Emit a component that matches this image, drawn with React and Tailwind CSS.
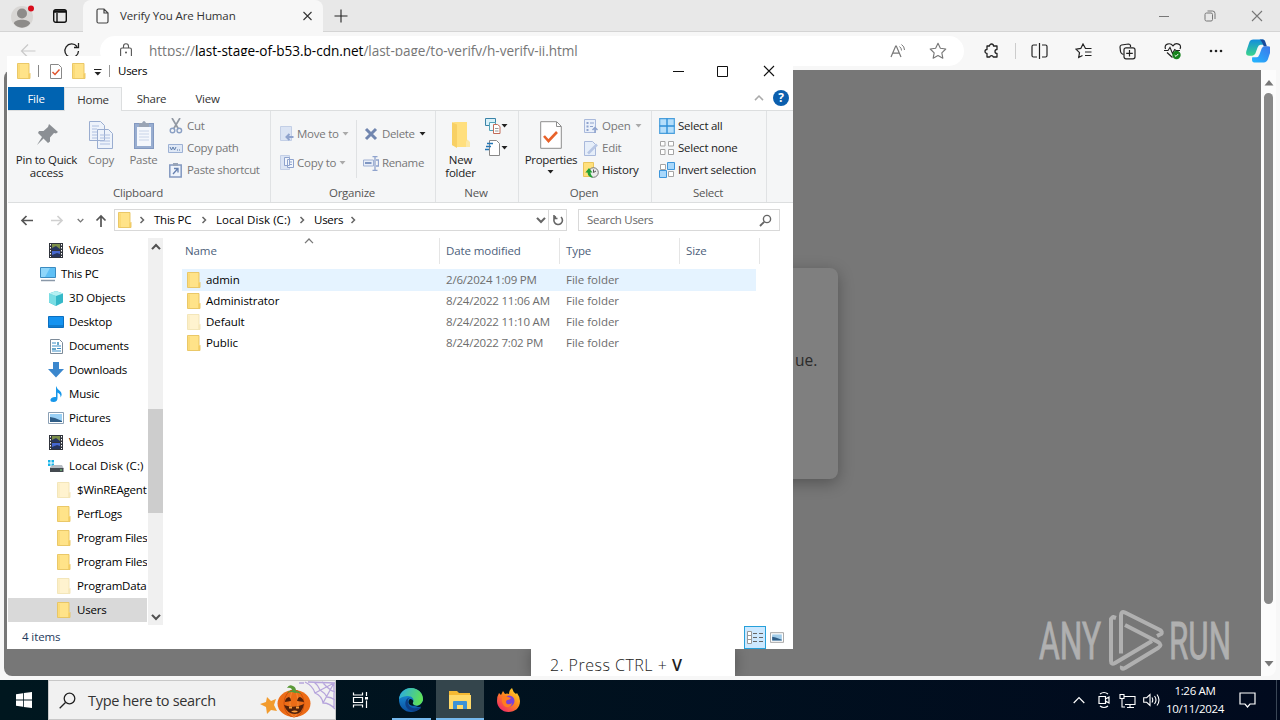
import React from "react";

const Svg = ({ w = 16, h = w, vb, className = "", children }) => (
  <svg width={w} height={h} viewBox={vb || `0 0 ${w} ${h}`} fill="none" className={`shrink-0 ${className}`}>
    {children}
  </svg>
);

/* ---------- shared glyphs ---------- */
const Folder = ({ pale = false }) => (
  <Svg w={14} h={16}>
    <path d="M.5.500h11.500v9l1 1v5H.5z" fill={pale ? "#fff3cf" : "#ffe389"} stroke={pale ? "#f2e3b4" : "#e8c35e"} strokeWidth=".9" />
    <path d="M1.300 15V1.500h1.500V15z" fill={pale ? "#fbecc0" : "#fad872"} />
    <path d="M11.300 15V10l1.500 1v4z" fill={pale ? "#f5e6b8" : "#f2cb60"} />
  </Svg>
);
const Caret = ({ c = "#222" }) => (
  <Svg w={7} h={4}><path d="M.5 0h6l-3 3.400z" fill={c} /></Svg>
);
const Chevron = ({ d = "r", c = "#666", s = 8, sw = 1.5 }) => (
  <Svg w={s} vb="0 0 8 8">
    <path d={{ r: "M2.500 1l3 3-3 3", d: "M.8 2.300L4 5.600l3.200-3.300", u: "M.8 5.700L4 2.400l3.200 3.300" }[d]} stroke={c} strokeWidth={sw} />
  </Svg>
);
const Arrow = ({ d = "M13 6.500H2M6.500 2L2 6.500 6.500 11", c = "#555" }) => (
  <Svg w={14} h={13}><path d={d} stroke={c} strokeWidth="1.700" /></Svg>
);

/* ---------- browser ---------- */
function TabStrip() {
  return (
    <div className="flex h-8 shrink-0 border-b border-[#d4d4d4] bg-[#e8e8e8]">
      <div className="flex w-[83px] items-center pl-[10px]">
        <Svg w={26} h={26}>
          <circle cx="12" cy="14" r="11" fill="#d8d6d4" />
          <circle cx="12" cy="10.500" r="5" fill="#8d8b89" />
          <path d="M4 20.500c0-5 16-5 16 0-3 5.500-13 5.500-16 0z" fill="#8d8b89" />
          <circle cx="21" cy="5.500" r="3" fill="#d80d1c" />
        </Svg>
        <Svg w={16} className="ml-4">
          <rect x="1.700" y="1.700" width="12.600" height="12.600" rx="2" stroke="#111" strokeWidth="1.400" />
          <path d="M2 3.500h12" stroke="#111" strokeWidth="2.500" /><path d="M5 5v9" stroke="#111" strokeWidth="1.400" />
        </Svg>
      </div>
      <div className="-mb-px flex w-[240px] items-center rounded-t-lg bg-[#f7f7f7] pl-[13px]">
        <Svg w={13} h={16}>
          <path d="M1 2.500Q1 1 2.500 1H8l4 4v8.500Q12 15 10.500 15h-8Q1 15 1 13.500zM8 1v4h4" stroke="#444" strokeWidth="1.200" />
        </Svg>
        <span className="ml-[11px] w-[176px] text-[11.5px] tracking-[-0.12px] text-[#333]">Verify You Are Human</span>
        <Svg w={20} h={10} className="ml-[2px]"><path d="M5.500 1l8 8M13.500 1l-8 8" stroke="#333" strokeWidth="1.100" /></Svg>
      </div>
      <Svg w={14} className="ml-[11px] mt-[9px]"><path d="M7 .5v13M.5 7h13" stroke="#222" strokeWidth="1.100" /></Svg>
      <div className="ml-auto flex items-center pr-[17px]">
        <Svg w={10}><path d="M0 5.500h10" stroke="#777" /></Svg>
        <Svg w={12} className="mx-[35px]">
          <rect x="1" y="3" width="7.500" height="8" rx="1.500" stroke="#777" />
          <path d="M3.500 1h5Q11 1 11 3.500V9" stroke="#777" />
        </Svg>
        <Svg w={12}><path d="M1 1l10 10M11 1L1 11" stroke="#777" strokeWidth="1.100" /></Svg>
      </div>
    </div>
  );
}

const STAR = "M8 1.200l2.100 4.400 4.800.6-3.500 3.400.9 4.800L8 12.100l-4.300 2.300.9-4.800L1.100 6.200l4.800-.6z";

function Toolbar() {
  return (
    <div className="flex h-[38px] shrink-0 items-center bg-[#f7f7f7]">
      <div className="flex w-[100px] items-center pl-5">
        <Svg w={16}><path d="M15.500 8H1.500M8 1.500L1.500 8 8 14.500" stroke="#c9c9c9" strokeWidth="1.200" /></Svg>
        <Svg w={18} className="ml-[27px]"><path d="M15.500 9A6.800 6.800 0 1 1 14 4.500M15.500 1v4.500H11" stroke="#222" strokeWidth="1.300" /></Svg>
      </div>
      <div className="flex h-[30px] w-[864px] items-center rounded-full bg-white pl-[19px] pr-[17px]">
        <Svg w={14} h={16}>
          <rect x="1.600" y="5" width="10.800" height="10" rx="1.500" stroke="#555" strokeWidth="1.100" />
          <path d="M4.500 5V3.200a2.500 2.500 0 0 1 5 0V5" stroke="#555" strokeWidth="1.100" /><circle cx="7" cy="9.500" r="1" fill="#555" />
        </Svg>
        <span className="ml-[16px] whitespace-nowrap text-[13.6px] tracking-[-0.05px] text-[#777]">
          https://<span className="text-black">last-stage-of-b53.b-cdn.net</span>/last-page/to-verify/h-verify-ii.html
        </span>
        <span className="ml-auto flex items-center gap-[22px]">
          <Svg w={17} h={16}>
            <path d="M1 14L5.700 3h.6L11 14M2.700 10.200h6.600" stroke="#777" strokeWidth="1.200" />
            <path d="M9.500 3.500q2 1.500 2 4M11.500 1.500q3 2 3 5.500" stroke="#777" />
          </Svg>
          <Svg w={18} vb="0 0 16 16"><path d={STAR} stroke="#777" strokeLinejoin="round" /></Svg>
        </span>
      </div>
      <div className="flex grow items-center pl-[19px]">
        <Svg w={17}>
          <path d="M4 3h2.500a2 2 0 0 1 4 0H14v3.500a1.900 1.900 0 1 0 0 4V14h-3.700a1.900 1.900 0 0 0-3.600 0H4v-3.500a2 2 0 1 1 0-4z" stroke="#222" strokeWidth="1.300" strokeLinejoin="round" />
        </Svg>
        <span className="ml-[15px] h-4 w-px bg-[#ccc]" />
        <Svg w={17} h={16} className="ml-[15px]">
          <path d="M6 2H2.500Q1 2 1 3.500v9Q1 14 2.500 14H6M11 2h3.500Q16 2 16 3.500v9q0 1.500-1.500 1.500H11M8.500 0v16" stroke="#222" strokeWidth="1.200" />
        </Svg>
        <Svg w={17} h={16} className="ml-[27px]">
          <path d="M10.500 5.500L8 1 5.800 5.400 1 6.100l3.500 3.500-.8 4.900 3.800-2M10 5.500h6.500M10 9h6.500M10 12.500h6.500" stroke="#222" strokeWidth="1.200" />
        </Svg>
        <Svg w={17} className="ml-[27px]">
          <path d="M4.500 11.500L3 10.800Q1.700 10 1.500 8.500L1 4Q1 2.500 2.500 2l7-1Q11 1 11.500 2.500V4" stroke="#222" strokeWidth="1.200" />
          <rect x="5" y="4.800" width="11" height="11" rx="2" stroke="#222" strokeWidth="1.200" /><path d="M10.500 7v6.500M7.200 10.300h6.600" stroke="#222" strokeWidth="1.200" />
        </Svg>
        <Svg w={18} className="ml-[28px]">
          <path d="M1.500 7C-.5 2 6 0 9 3.800 12 0 18.500 2 16 7M3 10.500l5.500 5" stroke="#222" strokeWidth="1.200" />
          <path d="M0 8.500h4l2-3 2.500 6 2.200-4 1.300 1h4" stroke="#222" strokeWidth="1.100" />
          <circle cx="12.500" cy="13" r="4.200" fill="#16821c" /><path d="M10.700 13.200l1.300 1.200 2.300-2.500" stroke="#fff" />
        </Svg>
        <Svg w={16} h={4} className="ml-[26px]"><circle cx="3" cy="2" r="1.300" fill="#222" /><circle cx="8" cy="2" r="1.300" fill="#222" /><circle cx="13" cy="2" r="1.300" fill="#222" /></Svg>
        <Svg w={24} h={24} vb="0 0 23 22" className="ml-[22px]">
          <defs>
            <linearGradient id="cpa" x1="0" y1="0" x2="0" y2="1"><stop stopColor="#128ddd" /><stop offset="1" stopColor="#3bd58c" /></linearGradient>
            <linearGradient id="cpb" x1="1" y1="0" x2="0" y2="1"><stop stopColor="#3f75e9" /><stop offset="1" stopColor="#22b8ff" /></linearGradient>
          </defs>
          <path d="M7 0h9q3 0 2 5h-4q-2 0-3 3l-2 5.500q-1 2-3 2H3q-4 0-2.500-5L3 3q1-3 4-3z" fill="url(#cpa)" />
          <path d="M17 22H8q-3 0-2-5h4q2 0 3-3l2-5.500q1-2 3-2h3q4 0 2.500 5L21 19q-1 3-4 3z" fill="url(#cpb)" />
          <path d="M13 0h3q2 0 3 3.500l1 3h-3Q15 1 13 0z" fill="#194a9c" />
        </Svg>
      </div>
    </div>
  );
}

function AnyRun() {
  return (
    <svg width="196" height="66" viewBox="0 0 196 66" className="absolute bottom-px right-[27px]" fill="none">
      <g fontFamily="Roboto, 'Liberation Sans', sans-serif" fontSize="52" fontWeight="400" fill="#b0b0b0" stroke="#b0b0b0" strokeWidth=".9">
        <text x="1" y="50" textLength="62" lengthAdjust="spacingAndGlyphs">ANY</text>
        <text x="131" y="50" textLength="62" lengthAdjust="spacingAndGlyphs">RUN</text>
      </g>
      <g stroke="#b0b0b0" strokeWidth="4" strokeLinejoin="round">
        <path d="M78 9l-3-1-2 2v42q0 4 4 2l37-22" />
        <path d="M119 27l4-2q2-2-1-4L87 3.500q-4-2-4 3v38" />
        <path d="M87 16l33 17q5 3 0 6L87 59q-4 2-3-2" />
      </g>
    </svg>
  );
}

function Browser() {
  return (
    <div className="flex h-[680px] flex-col bg-[#f7f7f7]">
      <TabStrip />
      <Toolbar />
      <div className="flex h-[606px] pl-1">
        <div className="relative w-[1257px] overflow-hidden rounded-bl-lg rounded-tl-lg bg-[#777]">
          <div className="absolute left-[420px] top-[198px] h-[211px] w-[414px] rounded-lg bg-[#7f7f7f] pl-[371px] pt-[80px] text-[15.5px] leading-6 text-[#2b2b2b] shadow-[0_4px_16px_rgba(0,0,0,0.3)]">ue.</div>
          <div className="absolute bottom-0 left-[527px] flex h-[27px] w-[204px] items-start bg-white pl-[19px] text-[16px] tracking-[0.5px] text-[#222] shadow-[0_0_14px_rgba(0,0,0,0.3)]">
            <span className="mt-[6px] whitespace-nowrap font-light leading-[21px]">2. Press CTRL + <b className="font-semibold">V</b></span>
          </div>
          <AnyRun />
        </div>
        <div className="flex w-[15px] flex-col items-center rounded-br-lg bg-[#fcfcfc] pt-[10px]">
          <Svg w={10} h={6}><path d="M5 0l4.500 5.500h-9z" fill="#777" /></Svg>
          <div className="mt-[7px] h-[511px] w-[9px] rounded-full bg-[#888]" />
          <Svg w={10} h={6} className="mt-[57px]"><path d="M5 5.500L.5 0h9z" fill="#777" /></Svg>
        </div>
      </div>
    </div>
  );
}

/* ---------- explorer ribbon ---------- */
const Group = ({ label, w, children }) => (
  <div className={`flex flex-col border-r border-[#e0e2e4] ${w}`}>
    <div className="flex h-[73px]">{children}</div>
    <div className="h-[18px] pr-[2px] text-center leading-[18px] text-[#555]">{label}</div>
  </div>
);
const Big = ({ w, icon, label, dim }) => (
  <div className={`flex shrink-0 flex-col items-center pt-[5px] ${w}`}>
    <div className="flex h-[37px] items-center">{icon}</div>
    <div className={`whitespace-pre text-center leading-[13px] ${dim ? "text-[#777]" : "text-[#222]"}`}>{label}</div>
  </div>
);
const Small = ({ icon, label, dim, caret, h = "h-[22px]", gap = "gap-[4px]" }) => (
  <div className={`flex items-center whitespace-nowrap ${h} ${gap} ${dim ? "text-[#777]" : "text-[#222]"}`}>
    <span className="flex w-[15px] justify-center">{icon}</span>
    {label && <span>{label}</span>}
    {caret && <Caret c={caret} />}
  </div>
);

const I = {
  pin: <Svg w={24} h={24}><path d="M14 1l9 8-2 1.500-2-.5-4 4.500v4l-2 1.500-4.500-4.500L2 22l5-8-4-4 1-2h4.500L13 4z" fill="#8b8f94" /></Svg>,
  copy: <Svg w={26} h={30}><path d="M1.500 1.500h11l4 4v15h-15zM9.500 9.500h11l4 4v15h-15z" fill="#eef3fb" stroke="#9aadd0" /><path d="M4 6h7M4 9h5M4 12h5M4 15h5M4 18h5M12 15h10M12 18h10M12 21h10M12 24h10" stroke="#aebfe0" /></Svg>,
  paste: <Svg w={22} h={30}><rect x="1.500" y="3.500" width="19" height="25" fill="#98add0" stroke="#8298c0" /><path d="M4 7h14v19H4z" fill="#f4f7fc" /><path d="M6 7V3h3q2-4 4 0h3v4z" fill="#9aa4b4" /><path d="M6 11h10M6 14h10M6 17h10M6 20h10" stroke="#c8d4e8" /></Svg>,
  cut: <Svg w={14} h={16}><path d="M3 0l6.500 11M11 0L4.500 11" stroke="#9299a3" strokeWidth="1.700" /><circle cx="3.500" cy="12.500" r="2.300" stroke="#8ba0c4" strokeWidth="1.400" /><circle cx="10.300" cy="12.500" r="2.300" stroke="#8ba0c4" strokeWidth="1.400" /></Svg>,
  path: <Svg w={15} h={9}><path d="M.5.500h14v8H.5z" fill="#dfe8f6" stroke="#9db1d4" /><path d="M2 3l1.500 3L5 3l1.500 3L8 3M9 6h1M11 6h1" stroke="#5d7cab" /></Svg>,
  shortcut: <Svg w={13} h={15}><path d="M.8 2h11.400v12H.8z" fill="#eef3fb" stroke="#8298c0" strokeWidth="1.500" /><path d="M4 0h5v3H4z" fill="#98a4b8" /><path d="M4 11l4.500-5M5 5.500h4v4" stroke="#6681b0" strokeWidth="1.300" /></Svg>,
  move: <Svg w={14} h={16}><path d="M.5.500h11v14H.5z" fill="#dbe4f4" stroke="#c3cfe6" /><path d="M13.500 11H7M9.500 8L6.500 11l3 3" stroke="#8fa3cd" strokeWidth="2" /></Svg>,
  copyto: <Svg w={14} h={16}><path d="M.5.500h9v14h-9z" fill="#dbe4f4" stroke="#c3cfe6" /><path d="M4.500 2.500h5v8h-5zM7.500 4.500h6v8h-6z" fill="#f2f6fc" stroke="#8fa3cd" /><path d="M9 7h3M9 9.500h3" stroke="#8fa3cd" /></Svg>,
  del: <Svg w={14} h={14}><path d="M2 2l10 10M12 2L2 12" stroke="#7186af" strokeWidth="3" /></Svg>,
  rename: <Svg w={16} h={15}><path d="M.5 4h10v6H.5z" fill="#e8eef9" stroke="#a0b1d3" /><path d="M2 7h6.500" stroke="#7f96c2" strokeWidth="2" /><path d="M9.500.700h5M12 .7v13.600M9.500 14.300h5M13 4h2.500v6H13" stroke="#8fa3cd" strokeWidth="1.300" /></Svg>,
  newFolder: <Svg w={20} h={28}><path d="M1 1.500L4 1h12v19l1.500 1v5H6L1 24z" fill="#ffdf7e" /><path d="M1 1.500l5 2V27l-5-3z" fill="#f8d064" /><path d="M15 26v-5.500l1.500-2 2.500 2.500v5z" fill="#fbe8a8" /></Svg>,
  newItem: <Svg w={16} h={16}><path d="M.5.500h10v7H.5z" fill="#d8f0f8" stroke="#3a83a8" /><path d="M4.500 4.500h6v8h-6z" fill="#eefaff" stroke="#54a3b9" /><path d="M8.500 6.500h4l2.500 2v7H8.500z" fill="#fff" stroke="#c26b58" /><path d="M10 10.500h3.500M10 13h3.500" stroke="#999" /></Svg>,
  easy: <Svg w={16} h={16}><path d="M4.500.500h7l3 3v12h-10z" fill="#fff" stroke="#888" /><path d="M2 3.500h6M1 6.500h5M0 9.500h4" stroke="#2376b5" strokeWidth="1.400" /></Svg>,
  props: <Svg w={22} h={28}><path d="M.7.700h16l4.600 4.600v22H.7z" fill="#fff" stroke="#8e8e8e" /><path d="M16.500 1v4.500H21" stroke="#8e8e8e" /><path d="M4 15l4.500 5L17 11" stroke="#e8622a" strokeWidth="2.600" /></Svg>,
  open: <Svg w={14} h={15}><path d="M.5.500h11v13H.5z" fill="#eaf0fa" stroke="#a9b9db" /><path d="M2.500 3h2v2h-2zM2.500 6.500h2v2h-2zM2.500 10h2v2h-2z" fill="#8fa3cd" /><path d="M6 4h4M6 7.500h3" stroke="#8fa3cd" /><path d="M11 14V9M8.500 11L11 8.500l2.500 2.500" stroke="#8fa3cd" strokeWidth="1.500" /></Svg>,
  edit: <Svg w={14} h={15}><path d="M.5.500h8l3 3v11H.5z" fill="#e6eef9" stroke="#a9b9db" /><path d="M4 12.500L13 3.500" stroke="#b7c6e4" strokeWidth="2.500" /></Svg>,
  history: <Svg w={16} h={16}><path d="M.5.500h10v14h-10z" fill="#ffe07c" stroke="#eac55c" /><circle cx="10.500" cy="10.500" r="4.800" fill="#eaeaea" stroke="#777" /><path d="M10.500 7.500v3l2.500-1.500" stroke="#555" /><path d="M10 15.500q-5 0-5.500-5H2.300L6 6l3.500 4.500H7.300Q8 13.500 10 15.500z" fill="#25a035" /></Svg>,
  all: <Svg w={16} h={16}><path d="M.7.700h14.600v14.600H.7z" fill="#b5defb" stroke="#4a9fdc" strokeWidth="1.200" /><path d="M8 .5v15M.5 8h15" stroke="#2f8fd8" strokeWidth="1.400" /></Svg>,
  none: <Svg w={14} h={14}><path d="M.5.500h4.500v4.500H.5zM8.500.500h5v4.500h-5zM.5 8.500h4.500v5H.5zM8.500 8.500h5v5h-5z" fill="#fff" stroke="#a5a5a5" /></Svg>,
  invert: <Svg w={16} h={16}><path d="M1.500 2.500h5v5h-5zM9.500 9.500h5v5h-5z" fill="#fff" stroke="#a5a5a5" /><path d="M8.500.500h7v7h-7zM.5 8.500h7v7h-7z" fill="#a9d8fb" stroke="#3d96db" /></Svg>,
};

function Ribbon() {
  return (
    <div className="flex h-[92px] border-b border-[#dcdedf] bg-[#f5f6f7]">
      <Group label="Clipboard" w="w-[263px]">
        <Big w="w-[77px]" icon={I.pin} label={"Pin to Quick\naccess"} />
        <Big w="w-[32px]" icon={I.copy} label="Copy" dim />
        <Big w="w-[53px]" icon={I.paste} label="Paste" dim />
        <div className="-ml-[2px] pt-[4px] tracking-[-0.33px]">
          <Small icon={I.cut} label="Cut" dim />
          <Small icon={I.path} label="Copy path" dim />
          <Small icon={I.shortcut} label="Paste shortcut" dim />
        </div>
      </Group>
      <Group label="Organize" w="w-[165px]">
        <div className="w-[85px] pl-[8px] pt-[8px]">
          <Small h="h-[29px]" gap="gap-[3px]" icon={I.move} label="Move to" dim caret="#aaa" />
          <Small h="h-[29px]" gap="gap-[3px]" icon={I.copyto} label="Copy to" dim caret="#aaa" />
        </div>
        <div className="mt-[9px] h-[58px] border-l border-[#dfe1e3] pl-[6px] tracking-[-0.35px]">
          <Small h="h-[28px]" icon={I.del} label="Delete" dim caret="#222" />
          <Small h="h-[30px]" icon={I.rename} label="Rename" dim />
        </div>
      </Group>
      <Group label="New" w="w-[83px]">
        <Big w="w-[49px]" icon={I.newFolder} label={"New\nfolder"} />
        <div className="pt-[4px]">
          <Small gap="gap-[1px]" icon={I.newItem} caret="#222" />
          <Small gap="gap-[1px]" icon={I.easy} caret="#222" />
        </div>
      </Group>
      <Group label="Open" w="w-[133px]">
        <Big w="w-[64px]" icon={I.props} label={<span className="tracking-[-0.32px]">Properties<span className="flex h-[12px] items-center justify-center"><Caret /></span></span>} />
        <div className="pt-[4px]">
          <Small icon={I.open} label="Open" dim caret="#aaa" />
          <Small icon={I.edit} label="Edit" dim />
          <Small icon={I.history} label="History" />
        </div>
      </Group>
      <Group label="Select" w="w-[115px]">
        <div className="pl-[7px] pt-[4px]">
          <Small icon={I.all} label="Select all" />
          <Small icon={I.none} label="Select none" />
          <Small icon={I.invert} label="Invert selection" />
        </div>
      </Group>
    </div>
  );
}

/* ---------- explorer body ---------- */
const Film = (
  <Svg w={14} h={15}><path d="M0 0h14v15H0z" fill="#30343c" /><path d="M3 1h8v6H3z" fill="#7c8f4a" /><path d="M3 8h8v6H3z" fill="#4668d0" /><path d="M3 5l4-2 4 3v1H3zM3 12l5-2 3 1v3H3z" fill="#26355e" /><path d="M1.500 1v13M12.500 1v13" stroke="#fff" strokeDasharray="1.500 1.500" /></Svg>
);
const Picture = (
  <Svg w={16} h={12}><path d="M.5.500h15v11H.5z" fill="#fff" stroke="#8ba0b5" /><path d="M2 2h12v8H2z" fill="#9ad0f5" /><path d="M2 5l5 1 7 3v1H2z" fill="#2f5d86" /></Svg>
);
const NAV = [
  ["Videos", 2, Film],
  ["This PC", 1, <Svg w={16} h={15}><path d="M.5.500h15v10H.5z" fill="#5fc0f5" stroke="#3b8bc0" /><path d="M1 1h9L5 10H1z" fill="#8fd6fa" /><path d="M1 13.500h14" stroke="#8a98a8" strokeWidth="1.500" /></Svg>],
  ["3D Objects", 2, <Svg w={16} h={15}><path d="M8 0l7 2.500v9L8 15l-7-3.500v-9z" fill="#35b8c8" /><path d="M1 2.500L8 5v10l-7-3.500z" fill="#79dde4" /><path d="M1 2.500L8 0l7 2.500L8 5z" fill="#b5f0f2" /></Svg>],
  ["Desktop", 2, <Svg w={16} h={12}><path d="M.5.500h15v11H.5z" fill="#1593f0" stroke="#0b6fc0" /><path d="M1 10h14" stroke="#0c64ad" /></Svg>],
  ["Documents", 2, <Svg w={13} h={15}><path d="M.5.500h9l3 3v11H.5z" fill="#fff" stroke="#7d8b99" /><path d="M2 4h4M2 7h9M7 9.500h4M2 12h9" stroke="#3b8fc8" /><path d="M2 9h4v2H2zM7 3h2v3H7z" fill="#6ba8c8" /></Svg>],
  ["Downloads", 2, <Svg w={16} h={16}><path d="M5 0h6v7h5l-8 8.500L0 7h5z" fill="#3b87cd" /></Svg>],
  ["Music", 2, <Svg w={13} h={16}><path d="M6 0q1 3 4 5 3 3 .5 6.500Q11 8 7.500 6.500V12q0 4-4 4-3.500 0-3-2.500Q1.500 10.500 6 11z" fill="#1797ea" /></Svg>],
  ["Pictures", 2, Picture],
  ["Videos", 2, Film],
  ["Local Disk (C:)", 2, <Svg w={16} h={14}><path d="M0 1h2.500v2.500H0zM3.500 1H6v2.500H3.500zM0 4.500h2.500V7H0zM3.500 4.500H6V7H3.500z" fill="#19b4e8" /><path d="M2 8l3-2h9l1.500 3v1H2z" fill="#b7bcc2" /><path d="M2 9h13.500v4H2z" fill="#444a50" /><path d="M12 11h2" stroke="#7de080" /></Svg>],
  ["$WinREAgent", 3, <Folder pale />],
  ["PerfLogs", 3, <Folder />],
  ["Program Files", 3, <Folder />],
  ["Program Files", 3, <Folder />],
  ["ProgramData", 3, <Folder pale />],
  ["Users", 3, <Folder />],
];
const INDENT = { 1: "pl-[32px]", 2: "pl-[40px]", 3: "pl-[48px]" };
const FILES = [
  ["admin", "2/6/2024 1:09 PM"],
  ["Administrator", "8/24/2022 11:06 AM"],
  ["Default", "8/24/2022 11:10 AM"],
  ["Public", "8/24/2022 7:02 PM"],
];

function Explorer() {
  return (
    <div className="absolute left-[7px] top-[56px] flex h-[593px] w-[786px] flex-col bg-white pl-px text-[11.5px] tracking-[-0.25px]">
      <div className="flex h-[31px] shrink-0 items-center pb-px pl-[9px]">
        <Folder />
        <span className="ml-[7px] h-3 w-px bg-[#888]" />
        <Svg w={12} h={15} className="ml-[11px]"><path d="M.5.500h8l3 3v11H.5z" fill="#fff" stroke="#888" /><path d="M2.500 8l2.500 2.500 4.500-5" stroke="#e0552e" strokeWidth="1.500" /></Svg>
        <span className="ml-[10px]"><Folder /></span>
        <Svg w={8} h={7} className="ml-[8px] mt-[3px]"><path d="M0 .5h7.500" stroke="#222" /><path d="M.5 3h6.500L3.800 6.500z" fill="#222" /></Svg>
        <span className="ml-[7px] h-3 w-px bg-[#999]" />
        <span className="ml-[8px] text-black">Users</span>
        <span className="ml-auto flex items-center pr-[18px]">
          <Svg w={11}><path d="M0 5.500h11" stroke="#111" /></Svg>
          <Svg w={11} className="ml-[33px]"><path d="M.5.500h10v10H.5z" stroke="#111" /></Svg>
          <Svg w={12} className="ml-[35px]"><path d="M1 1l10 10M11 1L1 11" stroke="#111" strokeWidth="1.100" /></Svg>
        </span>
      </div>
      <div className="flex h-6 shrink-0 border-b border-[#dcdedf] text-center leading-[24px] text-[#333]">
        <div className="h-[23px] w-14 bg-[#0063b1] text-white">File</div>
        <div className="h-6 w-[58px] border-x border-t border-[#dcdedf] bg-[#f5f6f7] leading-[23px]">Home</div>
        <div className="w-[58px] pl-px">Share</div>
        <div className="w-[54px] pl-px">View</div>
        <div className="ml-auto flex items-center gap-[9px] pb-[2px] pr-[4px]">
          <Chevron d="u" c="#aaa" s={10} sw={1.200} />
          <span className="flex size-4 items-center justify-center rounded-full bg-[#0b5fae] text-[12px] font-bold leading-none text-white">?</span>
        </div>
      </div>
      <Ribbon />
      <div className="flex h-[35px] shrink-0 items-center pb-px pl-[12px]">
        <Arrow />
        <span className="ml-[16px]"><Arrow d="M1 6.500h11M7.500 2L12 6.500 7.500 11" c="#d0d0d0" /></span>
        <span className="ml-[13px]"><Chevron d="d" c="#777" s={7} /></span>
        <span className="ml-[10px]"><Arrow d="M7 13V2M2.500 6.500L7 2l4.500 4.500" /></span>
        <div className="ml-[6px] flex h-[22px] w-[453px] items-center border border-[#d9d9d9] pl-[3px] text-black">
          <Folder />
          <span className="ml-[6px]"><Chevron /></span>
          <span className="ml-[8px] w-[39px] whitespace-nowrap">This PC</span>
          <span className="ml-[7px]"><Chevron /></span>
          <span className="ml-[8px] w-[75px] whitespace-nowrap tracking-[0.06px]">Local Disk (C:)</span>
          <span className="ml-[7px]"><Chevron /></span>
          <span className="ml-[8px] w-[28px]">Users</span>
          <span className="ml-[7px]"><Chevron /></span>
          <span className="ml-auto"><Chevron d="d" c="#666" s={10} sw={1.700} /></span>
          <span className="ml-[2px] flex h-full w-[18px] items-center justify-center border-l border-[#d9d9d9]">
            <Svg w={12} h={12}><path d="M9 3a4.300 4.300 0 1 1-5-.5M2 1v3.500h3.500" stroke="#666" strokeWidth="1.600" /></Svg>
          </span>
        </div>
        <div className="ml-[11px] flex h-[22px] w-[202px] items-center justify-between border border-[#d9d9d9] pl-[8px] pr-[7px] tracking-[-0.3px] text-[#666]">
          Search Users
          <Svg w={13} h={13}><circle cx="8" cy="5" r="3.600" stroke="#666" strokeWidth="1.400" /><path d="M5.200 7.800L1 12" stroke="#666" strokeWidth="1.900" /></Svg>
        </div>
      </div>
      <div className="flex h-[387px] shrink-0">
        <div className="w-[139px] overflow-hidden">
          {NAV.map(([name, level, icon], i) => (
            <div key={i} className={`flex h-6 items-center whitespace-nowrap text-black ${INDENT[level]} ${i === 15 ? "bg-[#d9d9d9]" : ""} ${i === 9 ? "tracking-[0.06px]" : "tracking-[-0.2px]"}`}>
              <span className="mr-[5px] flex w-4 shrink-0 justify-center">{icon}</span>
              {name}
            </div>
          ))}
        </div>
        <div className="ml-px flex w-[15px] flex-col items-center bg-[#f0f0f0] pb-[3px] pt-[4px]">
          <Chevron d="u" c="#505050" s={10} sw={1.700} />
          <div className="mt-[157px] h-[104px] w-full bg-[#cdcdcd]" />
          <span className="mt-auto"><Chevron d="d" c="#505050" s={10} sw={1.700} /></span>
        </div>
        <div className="w-[622px] pl-[19px]">
          <div className="relative flex h-[26px] leading-[26px] tracking-[-0.1px] text-[#4c607a]">
            <div className="w-[258px] border-r border-[#e5e5e5] pl-[3px]">Name</div>
            <div className="w-[120px] border-r border-[#e5e5e5] pl-[6px]">Date modified</div>
            <div className="w-[120px] border-r border-[#e5e5e5] pl-[6px]">Type</div>
            <div className="w-[80px] border-r border-[#e5e5e5] pl-[6px]">Size</div>
            <span className="absolute left-[122px] top-[-2px]"><Chevron d="u" c="#777" s={10} sw={1} /></span>
          </div>
          <div className="pt-[5px] text-[#6d6d6d]">
            {FILES.map(([name, date], i) => (
              <div key={name} className={`flex h-[21px] w-[574px] items-center whitespace-nowrap ${i === 0 ? "bg-[#e5f3ff] shadow-[0_1px_0_#e5f3ff]" : ""}`}>
                <span className="flex w-[264px] items-center gap-[5px] pl-[5px] tracking-[-0.07px] text-black"><Folder pale={i === 2} />{name}</span>
                <span className="w-[120px] tracking-[-0.2px]">{date}</span>
                <span className="tracking-[0px]">File folder</span>
              </div>
            ))}
          </div>
        </div>
      </div>
      <div className="flex h-6 items-center justify-between pl-[14px] pr-[9px] tracking-[-0.1px] text-[#1e395b]">
        4 items
        <span className="flex items-center gap-[4px]">
          <span className="flex h-[23px] w-[22px] items-center justify-center border border-[#26a0da] bg-[#cce8ff]">
            <Svg w={17} h={13}><path d="M.5.500h4v12h-4zM.5 4.500h4M.5 8.500h4" fill="#fff" stroke="#999" /><path d="M6 2.500h4M6 6.500h4M6 10.500h4M12 2.500h4M12 6.500h4M12 10.500h4" stroke="#666" /></Svg>
          </span>
          <Svg w={14} h={11} vb="0 0 16 12"><path d="M.5.500h15v11H.5z" fill="#fff" stroke="#999" /><path d="M2.500 2.500h11v7h-11z" fill="#a0cbe8" /><path d="M2.500 5l4 1 7 2.500v1h-11z" fill="#2f5d86" /></Svg>
        </span>
      </div>
    </div>
  );
}

/* ---------- taskbar ---------- */
function Taskbar() {
  return (
    <div className="flex h-10 bg-gradient-to-r from-[#00171f] to-[#010a1e]">
      <div className="flex w-12 items-center justify-center">
        <Svg w={16}><path d="M0 2.200L7 1.200v6.400H0zM7.800 1.100L16 0v7.600H7.800zM0 8.400h7v6.400L0 13.800zM7.800 8.400H16V16l-8.200-1.100z" fill="#fff" /></Svg>
      </div>
      <div className="flex w-[288px] items-center border border-[#c8c8c8] bg-[#f1f1f1] pl-[10px]">
        <Svg w={17}><circle cx="10.500" cy="6.500" r="5.300" stroke="#222" strokeWidth="1.300" /><path d="M6.500 10.500L.7 16.300" stroke="#222" strokeWidth="1.300" /></Svg>
        <span className="ml-[12px] mt-px whitespace-nowrap text-[14.5px] tracking-[-0.3px] text-[#333]">Type here to search</span>
        <Svg w={76} h={38} className="ml-auto">
          <path d="M40 2h5M49 1l27 1M75 2L56 12M75 2L64 22M75 2v26M46 1q8 4 10 11 7 3 8 10 7 0 12 6M55 1q4 3 6 8 5 3 7 7 4 0 8 3M63 1q3 3 5 5 4 4 8 5" stroke="#b6a5dc" strokeWidth="1.300" />
          <path d="M8 16l4 4 5-2-2 6 3 6-6-1-4 4-1-7-6-3 6-2z" fill="#f29b2d" />
          <ellipse cx="35" cy="22.500" rx="16.500" ry="13.500" fill="#ec6c17" />
          <ellipse cx="35" cy="22.500" rx="10" ry="13.500" stroke="#cf4f0c" /><ellipse cx="35" cy="22.500" rx="4" ry="13.500" stroke="#f58a35" />
          <path d="M28 12q2-3 5-2 0-4-5-3 2-4 6-2 3 1 3 5 4 0 5 3-4-2-6-1-4-2-8 0z" fill="#5b9a38" />
          <path d="M26 21q0-4 4-5 2 1 2 4zM38 20q1-4 3-4 3 1 4 5z" fill="#51200a" /><path d="M25 24q10 4 20-1-2 10-9 10-8 0-11-9z" fill="#51200a" /><path d="M30 25.500h3v2h-3zM37 25.500h3v2h-3zM32 30.500q4-2 7 0-3 2-7 0z" fill="#ff9d3a" />
        </Svg>
      </div>
      <div className="flex w-[48px] items-center justify-center">
        <Svg w={17} h={16}><path d="M1.500.500v2.500h9V.5M1.500 15.500V13h9v2.500M1.500 5.500h9v5h-9zM14.500 0v4M14.500 8.500V16" stroke="#fff" strokeWidth="1.200" /><path d="M13 5h3v2.500h-3z" fill="#fff" /></Svg>
      </div>
      <div className="ml-[2px] flex w-[50px] flex-col items-center justify-between pt-[8px]">
        <Svg w={24}>
          <defs>
            <linearGradient id="eg1" x1="0" y1="0" x2="1" y2=".3"><stop stopColor="#28a8ea" /><stop offset="1" stopColor="#5ee05a" /></linearGradient>
            <linearGradient id="eg2" x1="0" y1="0" x2="0" y2="1"><stop stopColor="#1b9de2" /><stop offset="1" stopColor="#0b4fa0" /></linearGradient>
          </defs>
          <circle cx="12" cy="12" r="12" fill="url(#eg2)" />
          <path d="M0 11C1 4 6 0 12 0c7 0 12 5 12 11 0 4-3 6.500-6.500 6.500-3 0-4.500-1.500-3.500-3 2-4-2-7-6-6.500-4 .5-7 2-8 3z" fill="url(#eg1)" />
          <path d="M9 12c-1 6 4 10 12 7.500 1-.5 1.500 0 .5 1C15 26 5 22 6.500 14 7 11 9 9.500 11 9.500 9.500 10.500 9 11 9 12z" fill="#0d3f87" />
          <path d="M11 11c2 0 4 1.500 3 3.500-1 1.500 1 3 3.500 3-3 1-8 0-8-3.500 0-1.500.5-2.500 1.500-3z" fill="#00171f" />
          <path d="M24 13v6l-3-.2q-2 .7-5-.8 5 1 8-5z" fill="#00151f" />
        </Svg>
        <span className="h-[2px] w-[39px] bg-[#76b9ed]" />
      </div>
      <div className="flex w-12 flex-col items-center justify-between bg-[#34454c] pt-[10px]">
        <Svg w={22} h={20}><path d="M0 1h8l2 2h11v16H0z" fill="#f5b932" /><path d="M0 5h22v14H0z" fill="#ffd969" /><path d="M4 19v-7q0-1 1-1h12q1 0 1 1v7h-4v-4H8v4z" fill="#3d92d6" /></Svg>
        <span className="h-[2px] w-full bg-[#76b9ed]" />
      </div>
      <div className="flex w-[49px] items-center justify-center">
        <Svg w={23} h={24}>
          <defs><linearGradient id="fx" x1="1" y1="0" x2=".2" y2="1"><stop stopColor="#ffe62e" /><stop offset=".5" stopColor="#ff8a1c" /><stop offset="1" stopColor="#f0246a" /></linearGradient></defs>
          <path d="M2 5l2 2 2-4 2 3q2-1 4 0 0-4 3-6 1 4 4 6l1-1q3 4 3 8c0 7-5 11-11.500 11S0 19 0 13q0-5 2-8z" fill="url(#fx)" />
          <circle cx="12" cy="13" r="5.500" fill="#7a42d8" /><path d="M5 9q4-2 6 0l3 1q-1 2-4 2-2 2 0 4 3 1 5-1-1 5-6 4-5-2-4-10z" fill="#ff7c20" />
        </Svg>
      </div>
      <div className="ml-auto flex items-center text-white">
        <Svg w={12} h={8}><path d="M.7 7L6 1.500 11.300 7" stroke="#fff" strokeWidth="1.200" /></Svg>
        <Svg w={14} h={18} className="ml-[12px]"><path d="M3 3q4-3 8 0M3 15q4 3 8 0M2 5.500h6.500v7H2zM8.500 8L12 6v6l-3.500-2" stroke="#fff" strokeWidth="1.200" /></Svg>
        <Svg w={17} h={15} className="ml-[8px]"><path d="M5 3.500h11v8H6M8 14.500h7M11 11.500v3M1 1.500h4v4H1zM3 5.500V14h3" stroke="#fff" strokeWidth="1.100" /></Svg>
        <Svg w={17} h={14} className="ml-[7px]"><path d="M.7 4.700h3L7 1.500v11L3.700 9.300h-3zM9 4.500q1.500 2.500 0 5M11.500 3q3 4 0 8M14 1.500q4 5.500 0 11" stroke="#fff" strokeWidth="1.100" /></Svg>
        <div className="ml-[2px] w-[66px] whitespace-nowrap text-center text-[11.5px] leading-[18px] tracking-[-0.3px]">1:26 AM<br />10/11/2024</div>
        <Svg w={17} h={16} className="ml-[11px]"><path d="M1 1h15v11h-5l-2.500 3L6 12H1z" stroke="#fff" strokeWidth="1.200" /></Svg>
        <span className="ml-[20px] h-10 w-px bg-[#3a4656]" />
        <span className="w-[3px]" />
      </div>
    </div>
  );
}

export default function App() {
  return (
    <div className="relative h-[720px] w-[1280px] overflow-hidden font-['Open_Sans','Noto_Sans',sans-serif]">
      <Browser />
      <Taskbar />
      <Explorer />
    </div>
  );
}
